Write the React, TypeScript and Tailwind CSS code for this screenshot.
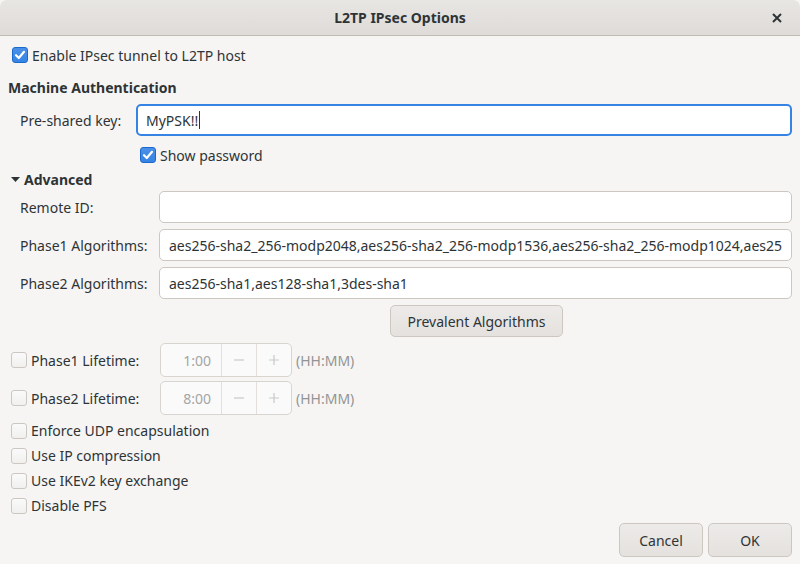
import React from "react";

const font = { fontFamily: '"Noto Sans", "DejaVu Sans", sans-serif' };

function Check({ checked, disabled }: { checked?: boolean; disabled?: boolean }) {
  if (checked) {
    return (
      <span className="inline-flex w-[16px] h-[16px] shrink-0 items-center justify-center rounded-[3px] border border-[#1b6acb] bg-gradient-to-b from-[#4a90e8] to-[#3584e4]">
        <svg width="12" height="12" viewBox="0 0 12 12">
          <path d="M2 6.2 L4.8 9 L10 2.8" fill="none" stroke="#ffffff" strokeWidth="2.2" strokeLinecap="round" strokeLinejoin="round" />
        </svg>
      </span>
    );
  }
  return (
    <span className={"inline-block w-[16px] h-[16px] shrink-0 rounded-[3px] border border-[#cdc7c2] bg-gradient-to-b from-[#fafafa] to-[#f1f0ef]" + (disabled ? " opacity-60" : "")} />
  );
}

function Field({ label, value }: { label: string; value: string }) {
  return (
    <div className="flex items-center h-[32px] -ml-[8px]">
      <div className="w-[159px] pl-[20px] shrink-0">{label}</div>
      <div className="flex-1 min-w-0 h-[32px] bg-white border border-[#cdc7c2] rounded-[5px] flex items-center px-[9px] overflow-hidden whitespace-nowrap">
        <span className="overflow-hidden">{value}</span>
      </div>
    </div>
  );
}

function Spin({ value }: { value: string }) {
  return (
    <div className="flex h-[34px] w-[132px] border border-[#d8d4d0] rounded-[5px] bg-[#fafafa] text-[#a4a6a6]">
      <div className="flex-1 flex items-center justify-end pr-[10px]">{value}</div>
      <div className="w-[35px] border-l border-[#e3dfdc] flex items-center justify-center">
        <svg width="12" height="12" viewBox="0 0 12 12"><path d="M1 6 H11" stroke="#c8c9c9" strokeWidth="1.2" /></svg>
      </div>
      <div className="w-[35px] border-l border-[#e3dfdc] flex items-center justify-center">
        <svg width="12" height="12" viewBox="0 0 12 12"><path d="M1 6 H11 M6 1 V11" stroke="#c8c9c9" strokeWidth="1.2" /></svg>
      </div>
    </div>
  );
}

export default function App() {
  return (
    <div className="w-[800px] h-[564px] bg-[#f6f5f4] text-[#2e3436] text-[14px] flex flex-col overflow-hidden" style={font}>
      <div className="h-[36px] shrink-0 relative flex items-center justify-center bg-gradient-to-b from-[#e8e6e3] to-[#dedbd8] border-b border-[#c0bab4] rounded-t-[7px]">
        <span className="font-bold text-[14px]">L2TP IPsec Options</span>
        <svg className="absolute right-[18px] top-[13px]" width="10" height="10" viewBox="0 0 10 10">
          <path d="M1 1 L9 9 M9 1 L1 9" stroke="#2e3436" strokeWidth="2" />
        </svg>
      </div>

      <div className="flex flex-col px-[8px]">
        <div className="flex items-center gap-[4px] h-[24px] mt-[7px] pl-[4px]">
          <Check checked />
          <span>Enable IPsec tunnel to L2TP host</span>
        </div>
        <div className="h-[24px] mt-[8px] flex items-center font-bold">Machine Authentication</div>

        <div className="flex items-center h-[32px] mt-[5px]">
          <div className="w-[128px] pl-[12px] shrink-0">Pre-shared key:</div>
          <div className="flex-1 h-[32px] bg-white border-2 border-[#3584e4] rounded-[5px] flex items-center px-[8px]">
            MyPSK!!<span className="inline-block w-[1px] h-[18px] bg-[#2e3436] ml-[1px]" />
          </div>
        </div>

        <div className="flex items-center gap-[4px] h-[24px] mt-[7px] pl-[132px]">
          <Check checked />
          <span>Show password</span>
        </div>

        <div className="flex items-center h-[22px] mt-[1px] pl-[2px] font-bold">
          <svg width="13" height="10" viewBox="0 0 13 10" className="mr-[1px]"><path d="M1 3 H10 L5.5 8 Z" fill="#2e3436" /></svg>
          Advanced
        </div>

        <div className="flex flex-col gap-[6px] mt-[1px]">
          <Field label="Remote ID:" value="" />
          <Field label="Phase1 Algorithms:" value="aes256-sha2_256-modp2048,aes256-sha2_256-modp1536,aes256-sha2_256-modp1024,aes256-sha1-modp2048" />
          <Field label="Phase2 Algorithms:" value="aes256-sha1,aes128-sha1,3des-sha1" />
        </div>

        <div className="flex mt-[6px] pl-[382px]">
          <button className="h-[32px] w-[173px] border border-[#cdc7c2] rounded-[5px] bg-gradient-to-b from-[#edebe9] to-[#e4e1de]">
            Prevalent Algorithms
          </button>
        </div>

        <div className="flex items-center h-[34px] mt-[6px] pl-[3px]">
          <Check />
          <span className="ml-[4px] w-[129px]">Phase1 Lifetime:</span>
          <Spin value="1:00" />
          <span className="ml-[4px] text-[#929595]">(HH:MM)</span>
        </div>
        <div className="flex items-center h-[34px] mt-[4px] pl-[3px]">
          <Check />
          <span className="ml-[4px] w-[129px]">Phase2 Lifetime:</span>
          <Spin value="8:00" />
          <span className="ml-[4px] text-[#929595]">(HH:MM)</span>
        </div>

        <div className="flex flex-col mt-[3px] pl-[3px]">
          {["Enforce UDP encapsulation", "Use IP compression", "Use IKEv2 key exchange", "Disable PFS"].map((t) => (
            <div key={t} className="flex items-center h-[25px] gap-[4px]">
              <Check />
              <span>{t}</span>
            </div>
          ))}
        </div>

        <div className="flex justify-end gap-[5px] mt-[5px]">
          <button className="h-[34px] w-[84px] border border-[#cdc7c2] rounded-[5px] bg-gradient-to-b from-[#edebe9] to-[#e4e1de]">Cancel</button>
          <button className="h-[34px] w-[84px] border border-[#cdc7c2] rounded-[5px] bg-gradient-to-b from-[#edebe9] to-[#e4e1de]">OK</button>
        </div>
      </div>
    </div>
  );
}
